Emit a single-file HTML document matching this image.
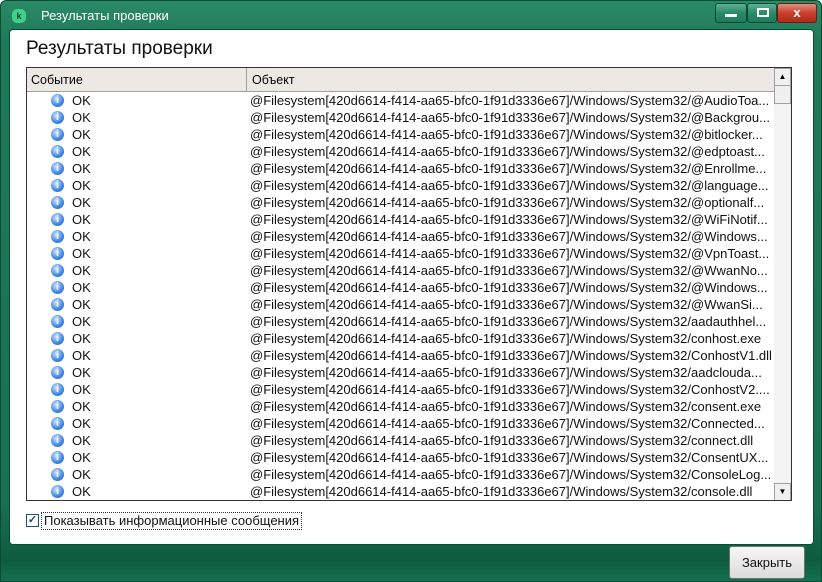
<html><head><style>
body{margin:0;width:822px;height:582px;overflow:hidden;font-family:"Liberation Sans",sans-serif;}
.win{position:absolute;left:0;top:0;width:820px;height:580px;border:1px solid #0b4a34;background:linear-gradient(#2a8a68 0px,#1f7a5a 40px,#187052 500px,#0e5c40 560px,#137050 580px);border-radius:6px 6px 0 0;}
.title{position:absolute;left:40px;top:7px;color:#fff;font-size:13px;}
.logo{position:absolute;left:11px;top:8px;width:14px;height:14px;border-radius:5px;background:#3fd08a;color:#0d4a33;font-size:9px;font-weight:bold;text-align:center;line-height:14px;}
.btn{position:absolute;top:2px;height:18px;border:1px solid #0a4a34;border-radius:3px;background:linear-gradient(#5fb092,#2a8a68 50%,#1e7c5c);}
.panel{position:absolute;left:9px;top:29px;width:803px;height:514px;background:#fff;border:1px solid #0b4a34;border-radius:4px;}
h1{position:absolute;left:26px;top:38px;margin:0;font-weight:normal;font-size:19px;color:#111;}
.tbl{position:absolute;left:26px;top:67px;width:764px;height:432px;border:1px solid #333;overflow:hidden;background:#fff;}
.hdr{position:absolute;left:0;top:0;width:747px;height:23px;background:#ece9e4;border-bottom:1px solid #a0a0a0;font-size:12.5px;}
.hdr span{position:absolute;top:5px;}
.row{position:absolute;left:0;height:17px;font-size:13px;width:747px;color:#111;white-space:nowrap;}
.ic{position:absolute;left:24px;top:2px;width:13px;height:13px;border-radius:50%;background:radial-gradient(circle at 40% 35%,#cfe4ff,#3b86e0 60%,#1e5fb8);color:#fff;font-size:10px;font-weight:bold;text-align:center;line-height:13px;}
.sb{position:absolute;left:747px;top:0;width:17px;height:432px;background:#f3f3f3;}
.cls{position:absolute;left:729px;top:546px;width:74px;height:31px;border:1px solid #707070;border-radius:3px;background:linear-gradient(#f6f6f6,#dcdcdc);font-size:13px;text-align:center;line-height:31px;color:#111;}
</style></head><body>
<div class="win">
<div class="logo">k</div>
<div class="title">Результаты проверки</div>
<div class="btn" style="left:714px;width:30px"><div style="position:absolute;left:9px;top:10px;width:12px;height:3px;background:#fff"></div></div>
<div class="btn" style="left:746px;width:28px"><div style="position:absolute;left:9px;top:4px;width:8px;height:5px;border:2px solid #fff"></div></div>
<div class="btn" style="left:776px;width:38px;background:linear-gradient(#e09080,#c8402c 50%,#b02a18);border-color:#6a1a10;color:#fff;font-weight:bold;font-size:13px;text-align:center;line-height:17px">x</div>
</div>
<div class="panel"></div>
<h1>Результаты проверки</h1>
<div class="tbl">
<div class="hdr"><span style="left:4px">Событие</span><div style="position:absolute;left:219px;top:0;width:1px;height:23px;background:#a0a0a0"></div><span style="left:225px">Объект</span></div>
<div id="rows"></div>
<div class="sb"><div style="position:absolute;left:0;top:0;width:15px;height:16px;border:1px solid #a0a0a0;background:#f0f0f0;font-size:8px;text-align:center;line-height:16px">▲</div><div style="position:absolute;left:0;top:17px;width:15px;height:17px;border:1px solid #a0a0a0;background:#f0f0f0"></div><div style="position:absolute;left:0;top:415px;width:15px;height:16px;border:1px solid #a0a0a0;background:#f0f0f0;font-size:8px;text-align:center;line-height:16px">▼</div></div>
</div>
<div style="position:absolute;left:26px;top:514px;width:11px;height:11px;border:1px solid #1c5180;background:#fff;color:#1c3f9f;font-size:11px;line-height:11px;text-align:center;font-weight:bold">✓</div>
<div style="position:absolute;left:41px;top:512px;border:1px dotted #333;padding:0 2px;font-size:13px;color:#111;height:16px;line-height:16px">Показывать информационные сообщения</div>
<div class="cls">Закрыть</div>
<script>
var n=["@AudioToa...","@Backgrou...","@bitlocker...","@edptoast...","@Enrollme...","@language...","@optionalf...","@WiFiNotif...","@Windows...","@VpnToast...","@WwanNo...","@Windows...","@WwanSi...","aadauthhel...","conhost.exe","ConhostV1.dll","aadclouda...","ConhostV2....","consent.exe","Connected...","connect.dll","ConsentUX...","ConsoleLog...","console.dll","x"];
var h="";for(var i=0;i<n.length;i++){h+='<div class="row" style="top:'+(24+i*17)+'px"><div class="ic">i</div><span style="position:absolute;left:45px;top:1px">OK</span><span style="position:absolute;left:223px;top:1px">@Filesystem[420d6614-f414-aa65-bfc0-1f91d3336e67]/Windows/System32/'+n[i]+'</span></div>';}
document.getElementById("rows").innerHTML=h;
</script>
</body></html>
